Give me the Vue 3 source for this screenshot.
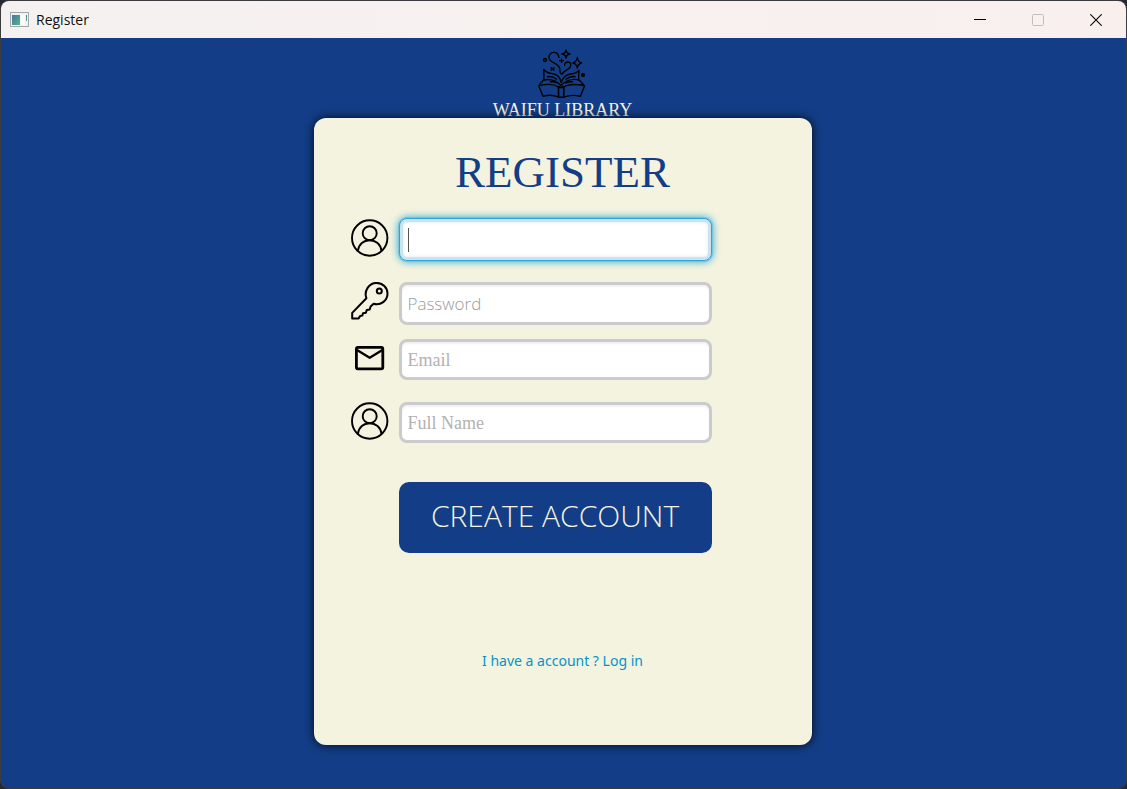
<script setup>
import { ref } from 'vue'

const fields = [
  { id: 'username', label: 'Username', type: 'text', icon: 'user', hint: '', tall: true, focused: true },
  { id: 'password', label: 'Password', type: 'password', icon: 'key', hint: 'Password', tall: true },
  { id: 'email', label: 'Email', type: 'email', icon: 'mail', hint: 'Email', serif: true },
  { id: 'fullname', label: 'Full name', type: 'text', icon: 'user', hint: 'Full Name', serif: true },
]
const values = ref({ username: '', password: '', email: '', fullname: '' })
</script>

<template>
  <div class="window">
    <header class="titlebar">
      <svg class="app-icon" width="20" height="16" viewBox="0 0 20 16" aria-hidden="true">
        <defs>
          <linearGradient id="tile" x1="0" y1="0" x2="1" y2="1">
            <stop offset="0" stop-color="#4678a4" />
            <stop offset="1" stop-color="#58b283" />
          </linearGradient>
        </defs>
        <rect x="0.5" y="0.5" width="18" height="14" fill="#eef2f3" stroke="#a3a8ad" />
        <rect x="2" y="3" width="8" height="10" fill="url(#tile)" />
        <rect x="11" y="3" width="4" height="10" fill="#fafafa" />
        <rect x="16" y="3" width="1" height="6" fill="url(#tile)" />
      </svg>
      <span class="title">Register</span>
      <div class="controls">
        <button type="button" aria-label="Minimize">
          <svg width="12" height="12" viewBox="0 0 12 12"><path d="M0 5.5H12" stroke="#000" /></svg>
        </button>
        <button type="button" aria-label="Maximize" disabled>
          <svg width="12" height="12" viewBox="0 0 12 12"><rect x="0.5" y="0.5" width="11" height="11" rx="1" fill="none" stroke="#c3bebe" /></svg>
        </button>
        <button type="button" aria-label="Close">
          <svg width="12" height="12" viewBox="0 0 12 12"><path d="M0.3 0.3L11.7 11.7M11.7 0.3L0.3 11.7" stroke="#111" stroke-width="1.2" /></svg>
        </button>
      </div>
    </header>

    <main class="content">
      <div class="brand">
        <svg class="logo" width="48" height="50" viewBox="0 0 48 50" fill="none" stroke="#000" stroke-width="1.4" stroke-linejoin="round" aria-hidden="true">
          <path d="M3 33.5L0.8 37L5 47.2C10 46 16 46 20.5 48.2H26C31 46 37 46 42.5 47.2L46.5 37L43.5 33.5" />
          <path d="M20.5 37.5V48M25.8 37.5V48M20.5 37.5Q23 39.5 25.8 37.5" stroke-width="1.7" />
          <path d="M1.5 36.5C9 34.8 16 35.2 20.5 38M46 36.5C37 34.8 30 35.2 25.8 38" />
          <path d="M3.5 33.5L5.5 31C12 29.5 18 31.5 23 36.5C28 31.5 35 29.5 41 31L43.5 33.5" />
          <path d="M6 31.5L5.7 20.5C9 24.5 13 24.2 16 25C20 26 22.5 29 23.2 34" />
          <path d="M40.5 31.5L41 21.5C38 25 34 24.7 30.5 25.5C26.5 27 24 30 23.2 34" />
          <path d="M9 27.8C13 27 16 28 19 30.5M37.5 27.8C34 27 31 28 27.5 30.5M12 33C15 32.2 17 32.8 19 34M35 33C32 32.2 30 32.8 27.5 34" />
          <path d="M21 9C20.5 0.5 10.5 2.5 11 9C11.5 14.5 23 14 22 22.5C21.8 24 23 24.5 24 25.5" />
          <path d="M26.7 17C26 14.5 28.2 13 30.3 13C34 13.5 33.3 18.5 30 20.2C27 22 25 22.5 24 25.5" />
          <path d="M28 1Q28.5 4.5 32 5Q28.5 5.5 28 9Q27.5 5.5 24 5Q27.5 4.5 28 1Z" />
          <path d="M39.3 8.5Q40 13 43.5 14Q40 15 39.3 19Q38.6 15 35 14Q38.6 13 39.3 8.5Z" />
          <path d="M23.5 9.5V14M21 11.7H26M13.3 18V22M15.8 18V22M13.2 18.5L16 21.5" stroke-width="1.2" />
          <circle cx="7" cy="11" r="1.5" />
          <circle cx="45" cy="26" r="1.4" fill="#000" />
        </svg>
        <span class="brand-name">WAIFU LIBRARY</span>
      </div>

      <form class="card" @submit.prevent>
        <h1>REGISTER</h1>
        <div v-for="f in fields" :key="f.id" class="row" :class="f.id">
          <label :for="f.id" :aria-label="f.label">
            <svg v-if="f.icon === 'user'" width="38" height="38" viewBox="0 0 38 38" fill="none" stroke="#000" stroke-width="1.9">
              <circle cx="18.7" cy="19" r="17.7" />
              <circle cx="18.7" cy="14.2" r="7" />
              <path d="M6.9 31.8C7.7 25 12.7 21.2 18.7 21.2S29.7 25 30.5 31.8" />
            </svg>
            <svg v-else-if="f.icon === 'key'" width="38" height="38" viewBox="0 0 38 38" fill="none" stroke="#000" stroke-width="2" stroke-linejoin="round">
              <path d="M15.4 16.2C12.7 9 18 1 25.3 0.9C31.8 0.8 36.5 5.6 36.5 11.5C36.5 18.7 29.6 23.9 22.6 21.8L19.6 24.5L18.7 27.5L15.8 27.9L14.9 30.7L12 31.2L11.4 33.6L9.2 33.9L7.6 36.4H1.2V30.9Z" />
              <circle cx="28.3" cy="9" r="2.5" />
            </svg>
            <svg v-else width="38" height="38" viewBox="0 0 38 38" fill="none" stroke="#000" stroke-width="2.8" stroke-linejoin="round">
              <rect x="5.4" y="8.4" width="26.4" height="21.4" rx="1.5" />
              <path d="M6 11L18.7 18.8L31.4 11" stroke-width="2.3" />
            </svg>
          </label>
          <div class="field">
            <input
              :id="f.id"
              v-model="values[f.id]"
              :type="f.type"
              :placeholder="f.hint"
              :class="{ tall: f.tall, serif: f.serif, focused: f.focused }"
            />
            <span v-if="f.focused" class="caret" aria-hidden="true"></span>
          </div>
        </div>
        <button class="submit" type="submit">CREATE ACCOUNT</button>
        <a class="login" href="#">I have a account ? Log in</a>
      </form>
    </main>
  </div>
</template>

<style>
body {
  background: #29292b;
}
</style>

<style scoped>
* {
  box-sizing: border-box;
}
.window {
  min-height: 100vh;
  display: flex;
  flex-direction: column;
  overflow: hidden;
  border: 1px solid #3c3c40;
  border-radius: 9px;
  background: #133d86;
  font-family: "Open Sans", "Noto Sans", sans-serif;
}
.titlebar {
  height: 37px;
  display: flex;
  align-items: center;
  padding-left: 9px;
  background: linear-gradient(90deg, #f5f1f1, #f9f0ee);
}
.title {
  margin-left: 6px;
  font-size: 14px;
  line-height: 20px;
  color: #111;
}
.controls {
  display: flex;
  margin-left: auto;
  padding-right: 1px;
  height: 100%;
}
.controls button {
  width: 58px;
  padding: 0;
  border: 0;
  background: none;
  display: flex;
  align-items: center;
  justify-content: center;
}
.content {
  flex: 1;
  display: flex;
  flex-direction: column;
  align-items: center;
  padding: 11px 2px 43px 0;
}
.brand {
  display: flex;
  flex-direction: column;
  align-items: center;
}
.logo {
  display: block;
}
.brand-name {
  height: 19px;
  font: 18px/22px "Liberation Serif", serif;
  color: #f4f3df;
}
.card {
  width: 498px;
  max-width: 100%;
  display: flex;
  flex-direction: column;
  padding: 28px 100px 74px 37px;
  border-radius: 12px;
  background: #f4f3df;
  box-shadow: 0 0 10px rgba(0, 0, 0, 0.85);
}
h1 {
  margin: 0 -63px 20px 0;
  font: 45px/52px "Liberation Serif", serif;
  color: #133d86;
  text-align: center;
}
.row {
  display: flex;
  gap: 10px;
}
.row svg {
  display: block;
}
.username label {
  padding-top: 1px;
}
.password {
  margin-top: 21px;
}
.email {
  margin-top: 14px;
}
.fullname {
  margin-top: 22px;
}
.field {
  position: relative;
  flex: 1;
}
input {
  display: block;
  width: 100%;
  height: 41px;
  padding: 0 6px;
  border: 3px solid #cbcbcb;
  border-radius: 8px;
  outline: 0;
  background: #fff;
  box-shadow: inset 0 2px 2px #f1f1f1;
  font: 300 17px "Open Sans", "Noto Sans", sans-serif;
  color: #333;
}
input.tall {
  height: 43px;
}
input.serif {
  padding-top: 2px;
  font: 18px "Liberation Serif", serif;
}
input::placeholder {
  color: #b2b2b2;
  opacity: 1;
}
input#password::placeholder {
  color: #9c9c9c;
}
input.focused {
  border: 1px solid #2fa5d6;
  box-shadow: inset 0 0 0 3px #cde2f0, inset 0 0 3px 4px #e8f2f8, 0 0 0 1px #7cc4dc, 0 0 9px #039ed3;
}
.caret {
  position: absolute;
  left: 9px;
  top: 10px;
  width: 1px;
  height: 24px;
  background: #555;
}
.submit {
  height: 71px;
  margin: 39px 0 0 48px;
  padding: 0 0 4px;
  border: 0;
  border-radius: 10px;
  background: #133d86;
  color: #f4f3df;
  font: 300 30px "Open Sans", "Noto Sans", sans-serif;
  white-space: nowrap;
}
.login {
  align-self: center;
  margin: 98px -63px 0 0;
  font-family: "Noto Sans", "Open Sans", sans-serif;
  font-size: 14px;
  line-height: 20px;
  color: #0096c9;
  text-decoration: none;
}
</style>
